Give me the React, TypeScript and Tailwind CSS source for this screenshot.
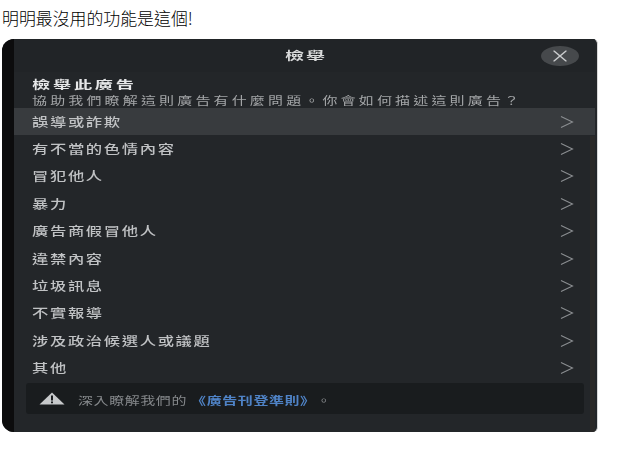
import { X } from "lucide-react";

const cjk = { fontFamily: '"Noto Sans CJK TC", "Noto Sans", sans-serif' };

const reasons = [
  "誤導或詐欺",
  "有不當的色情內容",
  "冒犯他人",
  "暴力",
  "廣告商假冒他人",
  "違禁內容",
  "垃圾訊息",
  "不實報導",
  "涉及政治候選人或議題",
  "其他",
];

function Chevron() {
  return (
    <svg width="14" height="14" viewBox="0 0 14 14" fill="none" className="shrink-0 text-[#8b8e91]">
      <path d="M1 1.5 L12.5 7 L1 12.5" stroke="currentColor" strokeWidth="1.1" />
    </svg>
  );
}

function Wide({ children, className }: { children: React.ReactNode; className?: string }) {
  return (
    <span className={`inline-block origin-left scale-x-[1.36] whitespace-nowrap ${className ?? ""}`}>{children}</span>
  );
}

export default function App() {
  return (
    <div className="h-[455px] w-[622px] overflow-hidden bg-white" style={cjk}>
      <p className="h-[39px] pl-[2px] pt-[6px] text-[16.9px] font-light leading-6 text-black">明明最沒用的功能是這個!</p>

      <div className="ml-[2px] flex h-[393px] w-[596px] overflow-hidden rounded-l-xl rounded-r-[5px] border-r border-[#d8d8d8] bg-[#232629] blur-[0.5px]">
        <div className="w-3 shrink-0 bg-[#0c0c0d]" />

        <div className="relative z-10 flex w-[576px] shrink-0 flex-col">
          <header className="relative -mr-[5px] flex h-[33px] shrink-0 items-center justify-center bg-[#212427]">
            <span className="inline-block origin-left -translate-x-[7px] scale-x-[1.65] whitespace-nowrap text-[11.5px] font-bold leading-none tracking-[1.2px] text-[#d9dadb]">
              檢舉
            </span>
            <button className="absolute right-[16px] top-[7px] flex h-[20px] w-[38px] items-center justify-center rounded-[50%] bg-[#46494c] text-[#c9cbcd]">
              <X size={20} strokeWidth={1.4} className="scale-x-[1.2]" />
            </button>
          </header>

          <div className="h-[36px] shrink-0 pl-[18px] pt-[4px]">
            <div className="h-[16px] leading-[12px]">
              <span className="inline-block origin-left scale-x-[1.65] whitespace-nowrap text-[11px] font-bold leading-[12px] tracking-[1.7px] text-[#e6e7e8]">
                檢舉此廣告
              </span>
            </div>
            <div className="h-[13px] leading-[13px]">
              <Wide className="text-[11px] leading-[13px] tracking-[2.35px] text-[#a4a6a8]">協助我們瞭解這則廣告有什麼問題。你會如何描述這則廣告？</Wide>
            </div>
          </div>

          <ul className="shrink-0">
            {reasons.map((reason, i) => (
              <li
                key={reason}
                className={`-mr-[5px] flex h-[27.4px] items-center justify-between pl-[18px] pr-[21px] ${
                  i === 0 ? "bg-[#383b3e]" : ""
                }`}
              >
                <Wide className="text-[12px] font-medium tracking-[1.2px] text-[#c0c2c4]">{reason}</Wide>
                <Chevron />
              </li>
            ))}
          </ul>

          <div className="ml-[12px] mr-[6px] mt-[1px] flex h-[31px] shrink-0 items-center rounded-[3px] bg-[#191c1e] pl-[13px]">
            <svg width="26" height="13" viewBox="0 0 26 13" className="shrink-0">
              <path d="M13 0.5 L25.5 12.5 H0.5 Z" fill="#c7c9cb" />
              <path d="M12 3.5 h2 v5 h-2 z M12 9.5 h2 v1.8 h-2 z" fill="#191c1e" />
            </svg>
            <div className="ml-[13px] leading-none">
              <Wide className="text-[11px] tracking-[0.45px] text-[#85888b]">
                深入瞭解我們的<span className="ml-[3px] font-bold text-[#4f83c6]">《廣告刊登準則》</span><span className="ml-[6px]">。</span>
              </Wide>
            </div>
          </div>
        </div>

        <div className="mt-[97px] w-[5px] shrink-0 bg-[#2a2928]" />
      </div>
    </div>
  );
}
